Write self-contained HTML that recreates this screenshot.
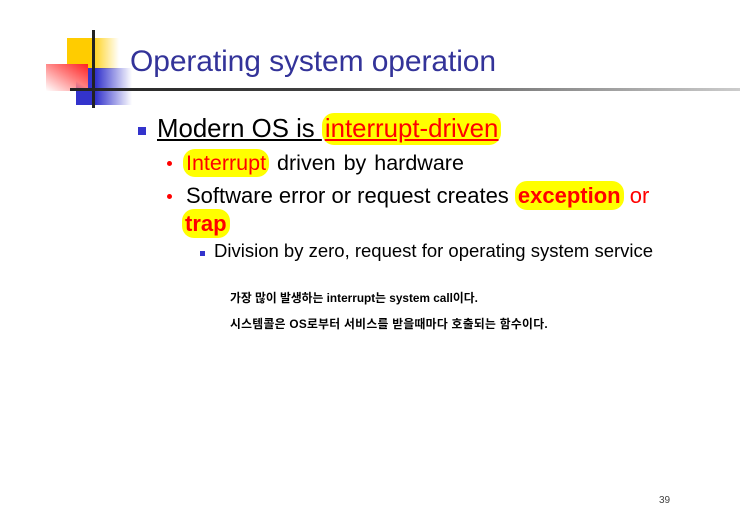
<!DOCTYPE html>
<html><head><meta charset="utf-8"><style>
body{margin:0;width:740px;height:526px;background:#fff;position:relative;overflow:hidden;font-family:"Liberation Sans",Arial,sans-serif}
div,span{position:absolute}
.t{white-space:nowrap}
.hl{position:static;background:#ffff00;border-radius:12px;color:#f00;padding:2px 3px}
</style></head><body>
<div style="left:67px;top:38px;width:52px;height:31px;background:linear-gradient(to right,#ffcc00 0,#ffcc00 45%,rgba(255,204,0,0) 100%)"></div>
<div style="left:76px;top:68px;width:56px;height:37px;background:linear-gradient(to right,#3333cc 0,#3333cc 35%,rgba(51,51,204,0) 100%)"></div>
<div style="left:46px;top:64px;width:42px;height:27px;background:linear-gradient(to bottom left,#ff2020 0,#ff8080 45%,rgba(255,255,255,0) 100%)"></div>
<div style="left:92px;top:30px;width:3px;height:78px;background:#222"></div>
<div style="left:70px;top:88px;width:670px;height:3px;background:linear-gradient(to right,#222 0,#444 40%,#ccc 100%)"></div>
<div class="t" style="left:130px;top:45px;font-size:30px;color:#333399;letter-spacing:-0.1px">Operating system operation</div>
<div style="left:138px;top:127px;width:8px;height:8px;background:#3333cc"></div>
<div class="t" style="left:157px;top:115px;font-size:25.8px;color:#000;text-decoration:underline">Modern OS is <span class="hl" style="text-decoration:underline">interrupt-driven</span></div>
<div style="left:167px;top:161px;width:5px;height:5px;border-radius:50%;background:#f00"></div>
<div class="t" style="left:183px;top:151px;font-size:21.5px;word-spacing:2px"><span class="hl">Interrupt</span> driven by hardware</div>
<div style="left:167px;top:194px;width:5px;height:5px;border-radius:50%;background:#f00"></div>
<div class="t" style="left:186px;top:183px;font-size:22px">Software error or request creates <span class="hl" style="font-weight:bold">exception</span> <span style="position:static;color:#f00">or</span></div>
<div class="t" style="left:182px;top:211px;font-size:22px"><span class="hl" style="font-weight:bold">trap</span></div>
<div style="left:200px;top:251px;width:5px;height:5px;background:#3333cc"></div>
<div class="t" style="left:214px;top:240px;font-size:18.5px">Division by zero, request for operating system service</div>
<div class="t" style="left:230px;top:289px;font-size:11.8px;font-weight:bold;font-family:'Liberation Sans','Noto Sans CJK KR',sans-serif">가장 많이 발생하는 interrupt는 system call이다.</div>
<div class="t" style="left:230px;top:315px;font-size:11.8px;font-weight:bold;font-family:'Liberation Sans','Noto Sans CJK KR',sans-serif;letter-spacing:0.3px">시스템콜은 OS로부터 서비스를 받을때마다 호출되는 함수이다.</div>
<div class="t" style="left:659px;top:495px;font-size:10px;color:#444">39</div>
</body></html>
